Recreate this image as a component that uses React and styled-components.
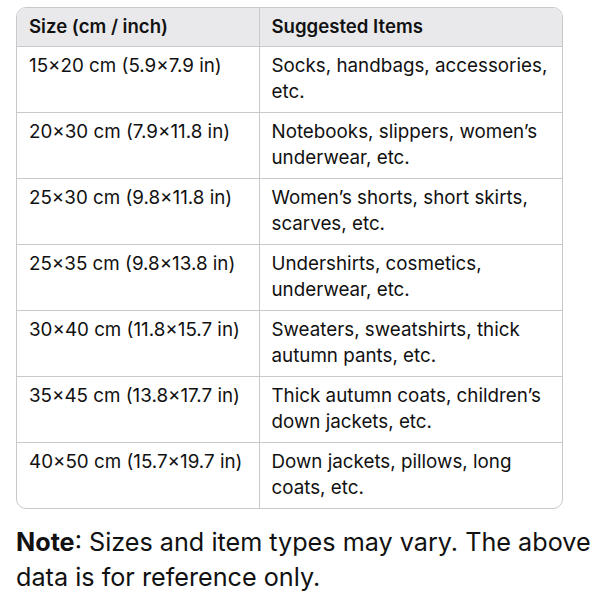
import styled, { createGlobalStyle } from 'styled-components';

const GlobalStyle = createGlobalStyle`
  body {
    margin: 0;
    background: #ffffff;
    font-family: Inter, "Noto Sans", sans-serif;
    color: #111111;
  }
`;

const rows = [
  ['15×20 cm (5.9×7.9 in)', 'Socks, handbags, accessories, etc.'],
  ['20×30 cm (7.9×11.8 in)', 'Notebooks, slippers, women’s underwear, etc.'],
  ['25×30 cm (9.8×11.8 in)', 'Women’s shorts, short skirts, scarves, etc.'],
  ['25×35 cm (9.8×13.8 in)', 'Undershirts, cosmetics, underwear, etc.'],
  ['30×40 cm (11.8×15.7 in)', 'Sweaters, sweatshirts, thick autumn pants, etc.'],
  ['35×45 cm (13.8×17.7 in)', 'Thick autumn coats, children’s down jackets, etc.'],
  ['40×50 cm (15.7×19.7 in)', 'Down jackets, pillows, long coats, etc.'],
];

export default function App() {
  return (
    <Page>
      <GlobalStyle />
      <TableFrame>
        <Table>
          <colgroup>
            <col style={{ width: 242 }} />
            <col />
          </colgroup>
          <thead>
            <tr>
              <HeadCell>Size (cm / inch)</HeadCell>
              <HeadCell>Suggested Items</HeadCell>
            </tr>
          </thead>
          <tbody>
            {rows.map(([size, items]) => (
              <tr key={size}>
                <Cell>{size}</Cell>
                <Cell>{items}</Cell>
              </tr>
            ))}
          </tbody>
        </Table>
      </TableFrame>
      <Note>
        <strong>Note</strong>: Sizes and item types may vary. The above data is for reference only.
      </Note>
    </Page>
  );
}

const Page = styled.div`
  width: 600px;
  height: 600px;
  padding: 7px 0 0 16px;
  box-sizing: border-box;
  overflow: hidden;
`;

const TableFrame = styled.div`
  width: 547px;
  border: 1px solid #c9c9cb;
  border-radius: 10px;
  overflow: hidden;
  box-sizing: border-box;
`;

const Table = styled.table`
  width: 100%;
  border-collapse: collapse;
  table-layout: fixed;
`;

const HeadCell = styled.th`
  background: #e9e9eb;
  text-align: left;
  font-weight: 600;
  font-size: 18.6px;
  line-height: 26px;
  height: 38px;
  padding: 5px 12px 6px;
  box-sizing: border-box;
  border-bottom: 1px solid #c9c9cb;
  &:first-child {
    border-right: 1px solid #c9c9cb;
  }
`;

const Cell = styled.td`
  vertical-align: top;
  font-size: 18.8px;
  line-height: 26px;
  height: 66px;
  padding: 6px 12px 0;
  box-sizing: border-box;
  border-top: 1px solid #c9c9cb;
  &:first-child {
    border-right: 1px solid #c9c9cb;
  }
`;

const Note = styled.p`
  margin: 16px 0 0;
  width: 590px;
  font-size: 25.2px;
  line-height: 35px;
  color: #111111;
  strong {
    font-weight: 700;
  }
`;
